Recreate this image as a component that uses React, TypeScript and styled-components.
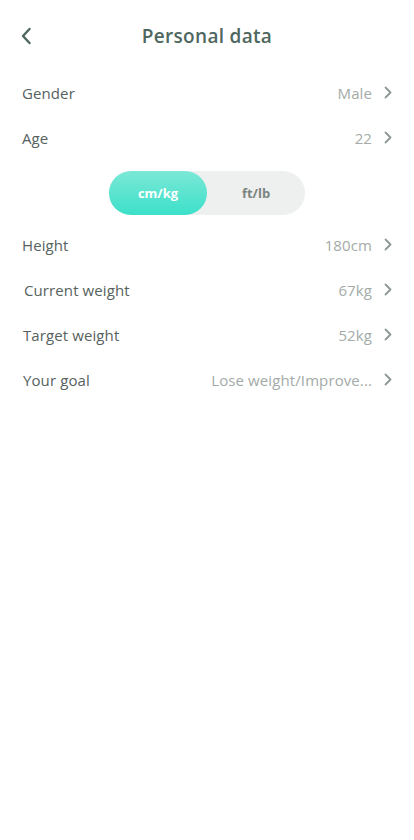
import styled, { createGlobalStyle } from 'styled-components';

const GlobalStyle = createGlobalStyle`
  body {
    margin: 0;
    background: #ffffff;
    font-family: "Open Sans", "Noto Sans", sans-serif;
  }
`;

const Page = styled.div`
  width: 414px;
  min-height: 840px;
  background: #ffffff;
`;

const Header = styled.div`
  display: grid;
  grid-template-columns: 50px 1fr 50px;
  align-items: center;
  height: 36px;
  padding-top: 18px;
`;

const BackButton = styled.button`
  border: none;
  background: none;
  padding: 0 0 0 20px;
  display: flex;
  align-items: center;
  cursor: pointer;
`;

const Title = styled.h1`
  margin: 0;
  text-align: center;
  font-size: 19px;
  font-weight: 600;
  color: #4e6760;
  letter-spacing: 0.3px;
`;

const List = styled.div`
  display: flex;
  flex-direction: column;
  padding: 16px 22px 0 22px;
`;

const Row = styled.div<{ $indent?: number }>`
  display: flex;
  align-items: center;
  justify-content: space-between;
  height: 45px;
  padding-left: ${(p) => p.$indent ?? 0}px;
`;

const Label = styled.span`
  font-size: 15px;
  color: #56625e;
  letter-spacing: 0.1px;
`;

const Value = styled.span`
  display: flex;
  align-items: center;
  gap: 12px;
  font-size: 15px;
  color: #a3aba8;
  letter-spacing: 0.1px;
`;

const ToggleWrap = styled.div`
  display: flex;
  justify-content: center;
  padding: 11px 0 7px;
`;

const Toggle = styled.div`
  display: grid;
  grid-template-columns: 98px 98px;
  height: 44px;
  border-radius: 22px;
  background: #eef0ef;
`;

const ToggleOption = styled.div<{ $active?: boolean }>`
  display: flex;
  align-items: center;
  justify-content: center;
  border-radius: 22px;
  font-size: 13px;
  font-weight: 700;
  color: ${(p) => (p.$active ? '#ffffff' : '#7b8581')};
  background: ${(p) => (p.$active ? 'linear-gradient(180deg, #7be8d7 0%, #3ce0c9 100%)' : 'transparent')};
`;

const Chevron = () => (
  <svg width="8" height="13" viewBox="0 0 8 13" fill="none">
    <path d="M1.5 1.5L6.5 6.5L1.5 11.5" stroke="#8d9894" strokeWidth="1.8" strokeLinecap="round" strokeLinejoin="round" />
  </svg>
);

const BackIcon = () => (
  <svg width="12" height="18" viewBox="0 0 12 18" fill="none">
    <path d="M9.5 2L3 9L9.5 16" stroke="#4e6760" strokeWidth="2.4" strokeLinecap="round" strokeLinejoin="round" />
  </svg>
);

type Item = { label: string; value: string; indent?: number };

const top: Item[] = [
  { label: 'Gender', value: 'Male' },
  { label: 'Age', value: '22' },
];

const bottom: Item[] = [
  { label: 'Height', value: '180cm' },
  { label: 'Current weight', value: '67kg', indent: 2 },
  { label: 'Target weight', value: '52kg', indent: 1 },
  { label: 'Your goal', value: 'Lose weight/Improve...', indent: 1 },
];

const DataRow = ({ item }: { item: Item }) => (
  <Row $indent={item.indent}>
    <Label>{item.label}</Label>
    <Value>
      {item.value}
      <Chevron />
    </Value>
  </Row>
);

export default function App() {
  return (
    <Page>
      <GlobalStyle />
      <Header>
        <BackButton>
          <BackIcon />
        </BackButton>
        <Title>Personal data</Title>
        <span />
      </Header>
      <List>
        {top.map((item) => (
          <DataRow key={item.label} item={item} />
        ))}
        <ToggleWrap>
          <Toggle>
            <ToggleOption $active>cm/kg</ToggleOption>
            <ToggleOption>ft/lb</ToggleOption>
          </Toggle>
        </ToggleWrap>
        {bottom.map((item) => (
          <DataRow key={item.label} item={item} />
        ))}
      </List>
    </Page>
  );
}
